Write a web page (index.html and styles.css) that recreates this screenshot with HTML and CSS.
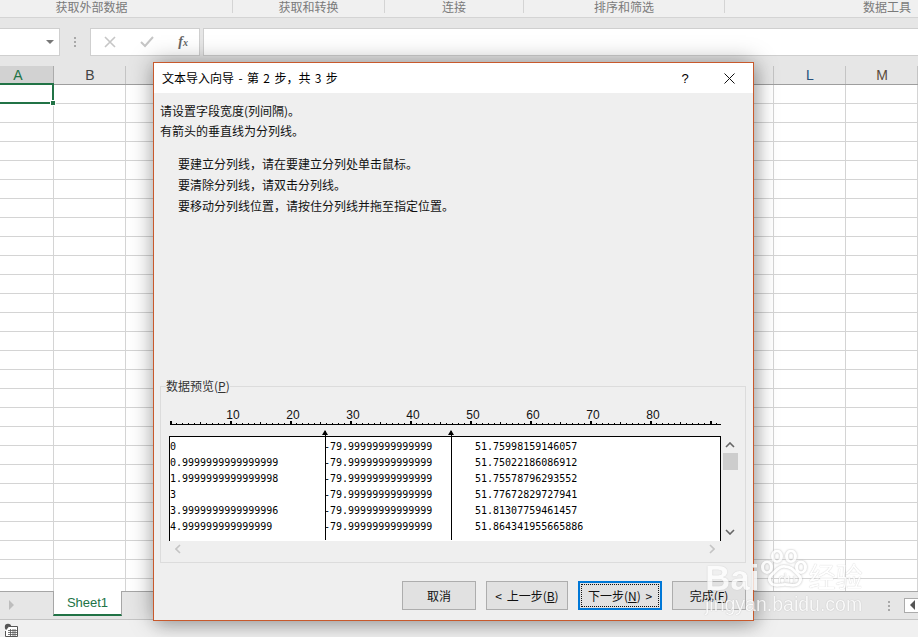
FILE: index.html
```html
<!DOCTYPE html>
<html lang="zh">
<head>
<meta charset="utf-8">
<title>文本导入向导</title>
<link rel="stylesheet" href="styles.css">
</head>
<body>
<div class="app">
  <div class="ribbon">
    <div class="rgroup g1">获取外部数据</div>
    <div class="rgroup g2">获取和转换</div>
    <div class="rgroup g3">连接</div>
    <div class="rgroup g4">排序和筛选</div>
    <div class="rgroup g5">数据工具</div>
  </div>
  <div class="formula">
    <div class="namebox"><span class="caret"></span></div>
    <div class="fdots"><i></i><i></i><i></i></div>
    <div class="fbtns">
      <svg width="12" height="12" viewBox="0 0 12 12"><path d="M1 1l10 10M11 1L1 11" stroke="#c6c6c6" stroke-width="1.6" fill="none"/></svg>
      <svg width="14" height="12" viewBox="0 0 14 12"><path d="M1 6l4 4 8-9" stroke="#c6c6c6" stroke-width="2" fill="none"/></svg>
      <span class="fx">f<small>x</small></span>
    </div>
    <div class="finput"></div>
  </div>
  <div class="colhead">
    <div class="col sel">A</div><div class="col">B</div><div class="col">C</div><div class="col">D</div><div class="col">E</div><div class="col">F</div><div class="col">G</div><div class="col">H</div><div class="col">I</div><div class="col">J</div><div class="col">K</div><div class="col blue">L</div><div class="col m">M</div>
  </div>
  <div class="grid"><div class="cursor"><span class="handle"></span></div></div>
  <div class="tabs">
    <svg class="tabarrow" width="6" height="10" viewBox="0 0 6 10"><path d="M0 0l5 5-5 5z" fill="#bdbdbd"/></svg>
    <div class="tab">Sheet1</div>
    <div class="tabend">
      <div class="fdots tabdots"><i></i><i></i><i></i></div>
      <div class="scrollbox"><svg width="6" height="10" viewBox="0 0 6 10"><path d="M6 0L1 5l5 5z" fill="#555"/></svg></div>
    </div>
  </div>
  <div class="status">
    <svg width="14" height="14" viewBox="0 0 14 14"><circle cx="4" cy="4" r="3.2" fill="#555"/><path d="M5 3.500h8.500v10H1.500V8" fill="#fff" stroke="#555"/><path d="M4 7.500h9M4 9.500h9M4 11.500h9M6.500 6v7M9 6v7M11 6v7" stroke="#555" stroke-width=".8"/></svg>
  </div>
</div>

<div class="dialog">
  <div class="dhead">
    <div class="dtitle">文本导入向导 - 第 2 步，共 3 步</div>
    <div class="help">?</div>
    <svg class="close" width="11" height="11" viewBox="0 0 11 11"><path d="M.5.500l10 10M10.500.500l-10 10" stroke="#111" stroke-width="1" fill="none"/></svg>
  </div>
  <div class="dbody">
    <p class="intro">请设置字段宽度(列间隔)。</p>
    <p class="intro">有箭头的垂直线为分列线。</p>
    <div class="tips">
      <p>要建立分列线，请在要建立分列处单击鼠标。</p>
      <p>要清除分列线，请双击分列线。</p>
      <p>要移动分列线位置，请按住分列线并拖至指定位置。</p>
    </div>
    <div class="group">
      <span class="glabel">数据预览(<u>P</u>)</span>
      <div class="ruler">
        <div class="rlabels"><span>10</span><span>20</span><span>30</span><span>40</span><span>50</span><span>60</span><span>70</span><span>80</span></div>
        <div class="rticks"></div>
      </div>
      <div class="prevwrap">
        <div class="preview">
          <div class="prow"><span>0</span><span>-79.99999999999999</span><span>51.75998159146057</span></div>
          <div class="prow"><span>0.9999999999999999</span><span>-79.99999999999999</span><span>51.75022186086912</span></div>
          <div class="prow"><span>1.9999999999999998</span><span>-79.99999999999999</span><span>51.75578796293552</span></div>
          <div class="prow"><span>3</span><span>-79.99999999999999</span><span>51.77672829727941</span></div>
          <div class="prow"><span>3.9999999999999996</span><span>-79.99999999999999</span><span>51.81307759461457</span></div>
          <div class="prow"><span>4.999999999999999</span><span>-79.99999999999999</span><span>51.864341955665886</span></div>
        </div>
        <div class="vbar">
          <svg width="10" height="6" viewBox="0 0 10 6"><path d="M1 5l4-4 4 4" stroke="#666" stroke-width="1.600" fill="none"/></svg>
          <div class="thumb"></div>
          <svg class="vdown" width="10" height="6" viewBox="0 0 10 6"><path d="M1 1l4 4 4-4" stroke="#666" stroke-width="1.600" fill="none"/></svg>
        </div>
        <div class="sep s1"><b></b></div>
        <div class="sep s2"><b></b></div>
      </div>
      <div class="hbar">
        <svg width="6" height="10" viewBox="0 0 6 10"><path d="M5 1L1 5l4 4" stroke="#c4c4c4" stroke-width="1.600" fill="none"/></svg>
        <svg width="6" height="10" viewBox="0 0 6 10"><path d="M1 1l4 4-4 4" stroke="#c4c4c4" stroke-width="1.600" fill="none"/></svg>
      </div>
    </div>
    <div class="btns">
      <div class="btn b1">取消</div>
      <div class="btn b2">&lt; 上一步(<u>B</u>)</div>
      <div class="btn b3 primary"><span class="focus">下一步(<u>N</u>) &gt;</span></div>
      <div class="btn b4">完成(<u>F</u>)</div>
    </div>
  </div>
</div>

<div class="watermark">
  <div class="wmtop">
    <span class="wmbai">Bai</span>
    <svg class="paw" width="48" height="38" viewBox="0 0 48 42" preserveAspectRatio="none"><g fill="none" stroke="#fff" stroke-width="3"><ellipse cx="7" cy="19" rx="4.500" ry="6"/><ellipse cx="17" cy="7" rx="4.500" ry="6"/><ellipse cx="31" cy="7" rx="4.500" ry="6"/><ellipse cx="41" cy="19" rx="4.500" ry="6"/><path d="M24 18c-6 0-8 5-12 9-5 5-2 12 5 12 3 0 5-1 8-1s5 1 8 1c7 0 10-7 5-12-4-4-7-9-14-9z"/></g></svg>
    <span class="wmdu">du</span>
    <span class="wmjy">经验</span>
  </div>
  <div class="wmurl">jingyan.baidu.com</div>
</div>
</body>
</html>
```
FILE: styles.css
```css
* { box-sizing: border-box; }
html, body { margin: 0; padding: 0; width: 918px; height: 637px; overflow: hidden; }
body { font-family: "Noto Sans CJK SC", "Liberation Sans", sans-serif; font-size: 12px; background: #e6e6e6; color: #000; position: relative; }
p { margin: 0; }

.app { display: flex; flex-direction: column; width: 918px; height: 637px; }

.ribbon { display: flex; height: 18px; background: #f0f0f0; border-bottom: 1px solid #d4d4d4; flex: none; color: #7a7a7a; line-height: 13px; }
.rgroup { height: 13px; border-right: 1px solid #d4d4d4; text-align: center; white-space: nowrap; }
.g1 { width: 233px; padding-right: 49px; }
.g2 { width: 152px; }
.g3 { width: 139px; }
.g4 { width: 201px; }
.g5 { flex: 1; border-right: 0; text-align: right; padding-right: 7px; }

.formula { display: flex; align-items: flex-start; height: 48px; flex: none; padding-top: 10px; background: #e6e6e6; }
.namebox { width: 60px; height: 28px; background: #fff; border: 1px solid #cfcfcf; border-left: 0; display: flex; align-items: center; justify-content: flex-end; padding-right: 5px; }
.caret { width: 0; height: 0; border-left: 4px solid transparent; border-right: 4px solid transparent; border-top: 4px solid #777; }
.fdots { width: 30px; height: 28px; display: flex; flex-direction: column; align-items: center; justify-content: center; gap: 2px; }
.fdots i { width: 2px; height: 2px; background: #a8a8a8; }
.fbtns { width: 110px; height: 28px; background: #fff; border: 1px solid #cfcfcf; display: flex; align-items: center; justify-content: space-between; padding: 0 11px 0 13px; }
.fx { font-family: "Liberation Serif", serif; font-style: italic; font-weight: bold; font-size: 14px; color: #666; line-height: 1; }
.fx small { font-size: 10px; }
.finput { flex: 1; height: 28px; margin-left: 3px; background: #fff; border-top: 1px solid #cfcfcf; border-bottom: 1px solid #cfcfcf; border-left: 1px solid #cfcfcf; }

.colhead { display: flex; height: 19px; margin-left: -18px; flex: none; border-bottom: 1px solid #9e9e9e; }
.col { width: 72px; flex: none; text-align: center; line-height: 18px; font-family: "Liberation Sans", sans-serif; font-size: 14px; color: #444; border-right: 1px solid #c4c4c4; padding-left: 1px; }
.col.sel { background: #d2d2d2; color: #217346; border-right-color: #ababab; }
.col.blue { color: #26507a; }
.col.m { color: #5a4a3a; }

.grid { flex: 1; min-height: 0; position: relative; background-color: #fff;
  background-image: linear-gradient(90deg, #d4d4d4 1px, transparent 1px), linear-gradient(#d4d4d4 1px, transparent 1px);
  background-size: 72px 100%, 100% 19px; background-position: 53px 0, 0 18px; }
.cursor { position: absolute; left: -2px; top: -2px; width: 56px; height: 21px; border: 2px solid #217346; }
.handle { position: absolute; right: -4px; bottom: -4px; width: 6px; height: 6px; background: #217346; border: 1px solid #fff; }

.tabs { height: 29px; flex: none; background: #e6e6e6; border-top: 1px solid #a6a6a6; border-bottom: 1px solid #c4c4c4; display: flex; align-items: flex-start; }
.tabarrow { margin: 8px 0 0 9px; flex: none; }
.tab { width: 69px; height: 25px; margin-left: 38px; margin-top: -1px; background: #fff; border: 1px solid #a6a6a6; border-top: 0; border-bottom: 2px solid #217346; color: #217346; font-family: "Liberation Sans", sans-serif; font-size: 13px; text-align: center; line-height: 24px; flex: none; }
.tabend { margin-left: auto; display: flex; align-items: center; height: 27px; }
.tabdots { width: 16px; height: 26px; }
.scrollbox { width: 14px; height: 15px; margin-left: 7px; margin-top: -1px; background: #fff; border: 1px solid #ababab; border-right: 0; display: flex; align-items: center; justify-content: center; }

.status { height: 17px; flex: none; background: #f0f0f0; padding: 3px 0 0 4px; }
.status svg { display: block; }

.dialog { position: absolute; left: 153px; top: 62px; width: 601px; height: 559px; background: #efefef; border: 1px solid #c8592c; box-shadow: 0 0 22px rgba(0,0,0,.35), 4px 6px 14px rgba(0,0,0,.12); display: flex; flex-direction: column; }
.dhead { height: 30px; flex: none; background: #fff; display: flex; align-items: center; padding: 0 18px 0 8px; }
.dtitle { font-size: 12px; line-height: 30px; flex: 1; word-spacing: 1.700px; }
.help { width: 12px; font-family: "Liberation Sans", sans-serif; font-size: 13px; margin-right: 33px; text-align: center; }
.close { flex: none; }

.dbody { flex: 1; display: flex; flex-direction: column; padding: 8px 7px 10px 6px; min-height: 0; }
.intro { line-height: 20px; color: #111; }
.tips { margin: 12px 0 0 18px; }
.tips p { line-height: 21px; color: #111; }

.group { position: relative; margin-top: auto; height: 177px; border: 1px solid #dcdcdc; padding: 0 0 0 8px; }
.glabel { position: absolute; left: 5px; top: -8px; line-height: 14px; background: #efefef; padding: 0; color: #333; }
.ruler { width: 552px; height: 38px; display: flex; flex-direction: column; justify-content: flex-end; }
.rlabels { display: flex; padding-left: 34px; font-family: "Liberation Sans", sans-serif; font-size: 12px; line-height: 12px; height: 12px; color: #111; }
.rlabels span { width: 60px; flex: none; text-align: center; }
.rticks { height: 4px; margin-left: 1px; width: 551px;
  background-image: linear-gradient(#000, #000),
    repeating-linear-gradient(90deg, #000 0 2px, transparent 2px 60px),
    repeating-linear-gradient(90deg, #000 0 1px, transparent 1px 30px),
    repeating-linear-gradient(90deg, #000 0 1px, transparent 1px 6px);
  background-repeat: no-repeat;
  background-size: 100% 1px, 100% 4px, 100% 3px, 100% 2px;
  background-position: bottom; }

.prevwrap { position: relative; margin-top: 11px; display: flex; height: 105px; }
.preview { width: 552px; height: 105px; background: #fff; border: 1px solid #000; border-bottom: 0; padding-top: 2px; font-family: "DejaVu Sans Mono", monospace; font-size: 10px; overflow: hidden; }
.prow { display: grid; grid-template-columns: 154px 151px 1fr; height: 16px; line-height: 16px; white-space: nowrap; }
.vbar { width: 16px; flex: none; display: flex; flex-direction: column; align-items: center; padding: 6px 0; margin-left: 1px; }
.thumb { width: 15px; height: 17px; background: #cdcdcd; margin-top: 5px; }
.vdown { margin-top: auto; }
.sep { position: absolute; top: -5px; height: 109px; width: 1px; background: #000; }
.sep b { position: absolute; left: -3px; top: -1px; width: 0; height: 0; border-left: 3.500px solid transparent; border-right: 3.500px solid transparent; border-bottom: 5px solid #000; }
.s1 { left: 156px; }
.s2 { left: 282px; }
.hbar { width: 552px; height: 16px; display: flex; justify-content: space-between; align-items: center; padding: 0 6px; }

.btns { display: flex; flex: none; margin-top: 18px; height: 29px; }
.btn { height: 29px; background: #e1e1e1; border: 1px solid #adadad; text-align: center; line-height: 27px; color: #111; flex: none; white-space: nowrap; word-spacing: 2px; }
.b1 { width: 74px; margin-left: 242px; }
.b2 { width: 82px; margin-left: 10px; }
.b3 { width: 84px; margin-left: 10px; }
.b4 { width: 74px; margin-left: 10px; }
.primary { border: 2px solid #0078d7; padding: 1px; line-height: 21px; }
.focus { display: block; height: 23px; border: 1px dotted #111; }

.watermark { position: absolute; left: 705px; top: 550px; width: 175px; pointer-events: none; color: #fff; opacity: .78; }
.wmtop { display: flex; align-items: flex-end; height: 45px; }
.wmbai { font-family: "Liberation Sans", sans-serif; font-weight: bold; font-size: 35px; line-height: 35px; text-shadow: 0 0 1px #aaa; }
.paw { flex: none; margin: 0 0 7px 1px; filter: drop-shadow(0 0 1px #aaa); }
.wmdu { font-family: "Liberation Sans", sans-serif; font-size: 16px; line-height: 20px; margin: 0 3px 5px -40px; width: 37px; text-align: center; color: #fff; text-shadow: 0 0 1px #888; }
.wmjy { font-size: 27px; line-height: 36px; margin-bottom: 1px; white-space: nowrap; text-shadow: 0 0 1px #aaa; }
.wmurl { font-family: "Liberation Sans", sans-serif; font-size: 19.500px; line-height: 22px; margin-top: -2px; white-space: nowrap; text-shadow: 0 0 1px #999; }
```
